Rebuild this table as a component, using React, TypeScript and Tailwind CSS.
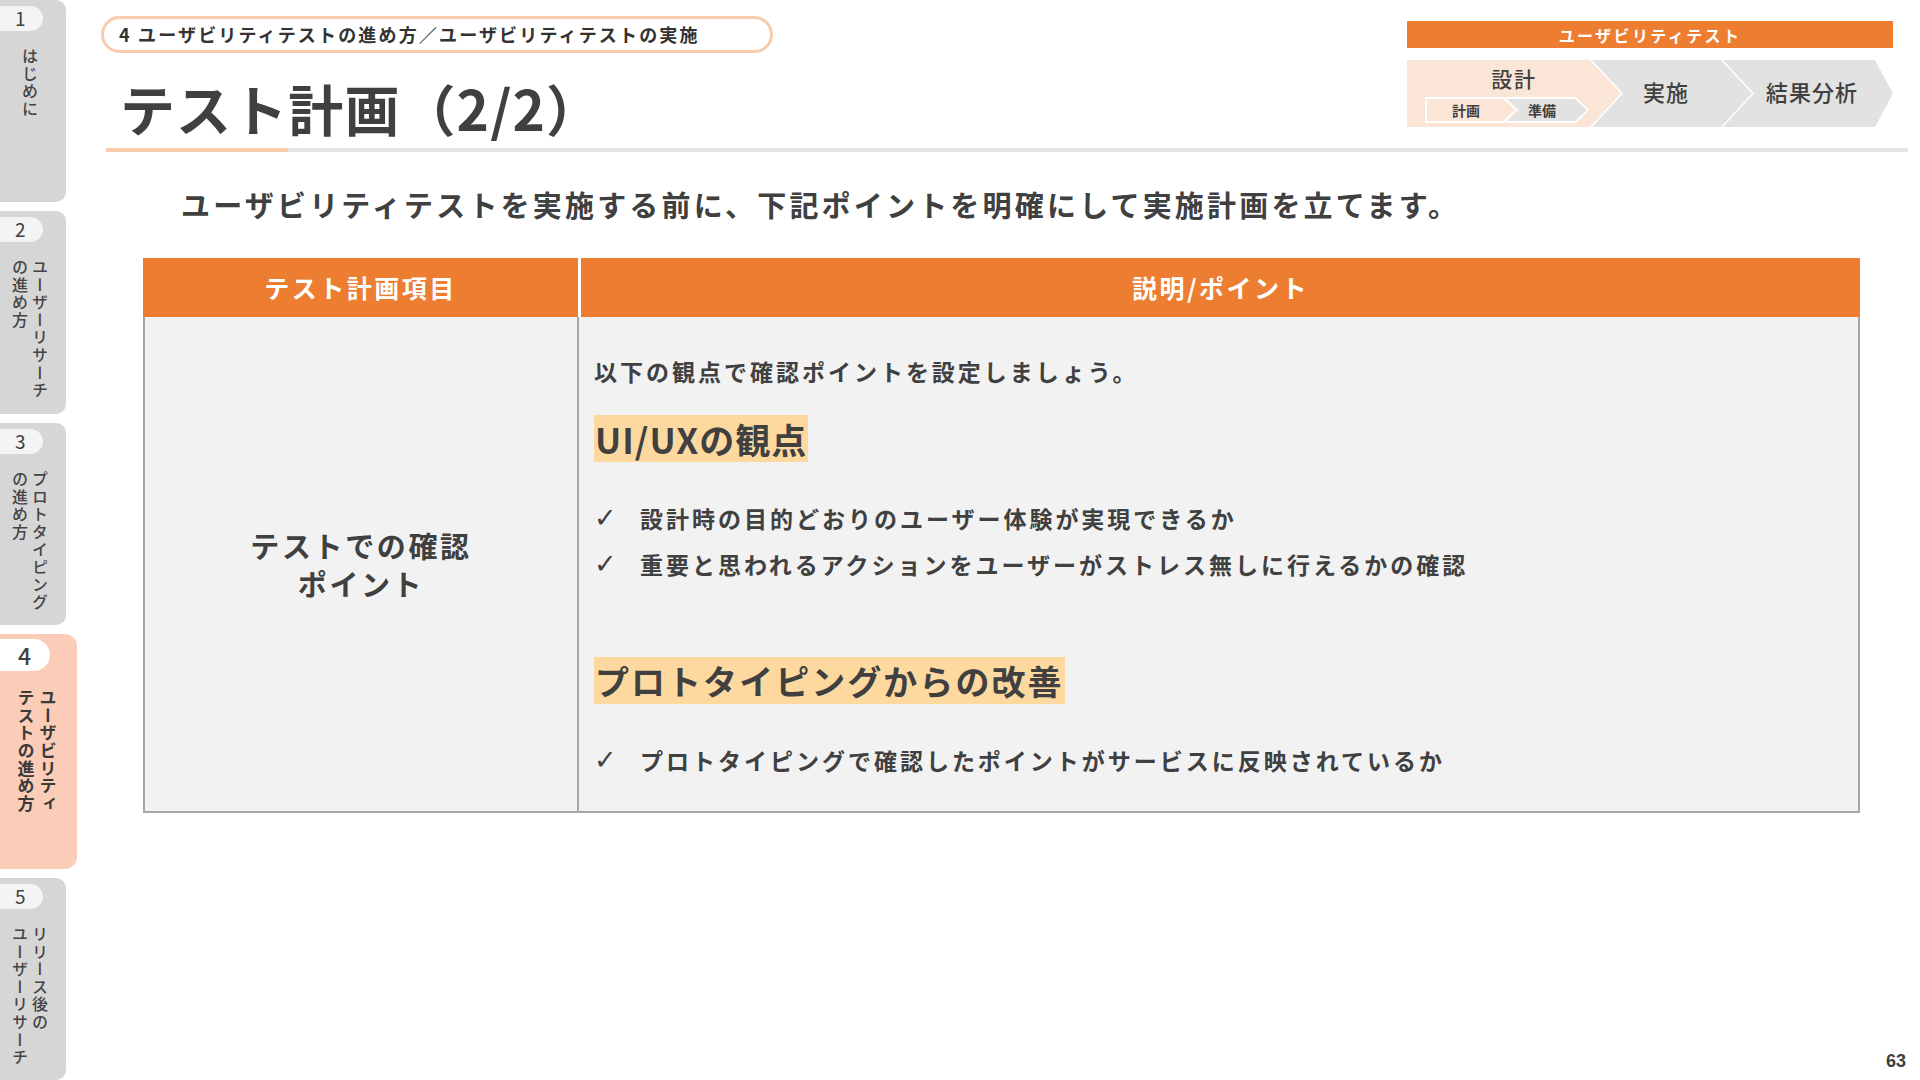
const JP = { fontFamily: '"Noto Sans CJK JP", "Noto Sans", sans-serif' };

const tabs = [
  { num: "1", lines: ["はじめに"], h: "h-[202px]" },
  { num: "2", lines: ["ユーザーリサーチ", "の進め方"], h: "h-[203px]" },
  { num: "3", lines: ["プロトタイピング", "の進め方"], h: "h-[202px]" },
  { num: "4", lines: ["ユーザビリティ", "テストの進め方"], h: "h-[235px]", active: true },
  { num: "5", lines: ["リリース後の", "ユーザーリサーチ"], h: "h-[202px]" },
];

function SideTab({ num, lines, h, active }: { num: string; lines: string[]; h: string; active?: boolean }) {
  if (active) {
    return (
      <div className={`${h} w-[77px] shrink-0 rounded-r-[12px] bg-[#fbcdb8] pt-[5px]`}>
        <div className="flex h-[32px] w-[50px] items-center rounded-r-full bg-white pl-[18px] text-[23px] font-medium text-[#404040]">
          {num}
        </div>
        <div className="mt-[18px] flex justify-center pr-[4px]">
          <div className="text-[17px] font-bold leading-[22px] tracking-[0.04em] text-[#3a3a3a] [writing-mode:vertical-rl]">
            {lines.map((l, i) => (
              <div key={i}>{l}</div>
            ))}
          </div>
        </div>
      </div>
    );
  }
  return (
    <div className={`${h} w-[66px] shrink-0 rounded-r-[10px] bg-[#d6d6d6] pt-[6px]`}>
      <div className="flex h-[25px] w-[43px] items-center rounded-r-full bg-[#f4f4f4] pl-[15px] text-[19px] text-[#404040]">
        {num}
      </div>
      <div className="mt-[17px] flex justify-center pr-[6px]">
        <div className="text-[16px] font-medium leading-[20px] tracking-[0.1em] text-[#444] [writing-mode:vertical-rl]">
          {lines.map((l, i) => (
            <div key={i}>{l}</div>
          ))}
        </div>
      </div>
    </div>
  );
}

function Process() {
  return (
    <div className="mr-[15px] w-[486px] shrink-0 pt-[21px]">
      <div className="flex h-[27px] items-center justify-center bg-[#ed7d31] text-[16px] font-bold tracking-[0.15em] text-white">
        ユーザビリティテスト
      </div>
      <div className="mt-[12px] flex h-[67px]">
        <div className="flex h-full w-[214px] shrink-0 flex-col bg-[#fbe5d6] pl-[18px] [clip-path:polygon(0_0,calc(100%-31px)_0,100%_50%,calc(100%-31px)_100%,0_100%)]">
          <div className="flex h-[37px] w-[178px] items-center justify-center text-[21px] font-medium tracking-[0.08em] text-[#404040]">
            設計
          </div>
          <div className="flex h-[26px]">
            <div className="h-full w-[92px] shrink-0 bg-white p-[2px] [clip-path:polygon(0_0,calc(100%-13px)_0,100%_50%,calc(100%-13px)_100%,0_100%)]">
              <div className="flex h-full w-full items-center justify-center bg-[#fbe5d6] pr-[10px] text-[14px] font-bold text-[#404040] [clip-path:polygon(0_0,calc(100%-12px)_0,100%_50%,calc(100%-12px)_100%,0_100%)]">
                計画
              </div>
            </div>
            <div className="ml-[-12px] h-full w-[84px] shrink-0 bg-white p-[2px] [clip-path:polygon(0_0,calc(100%-13px)_0,100%_50%,calc(100%-13px)_100%,0_100%,13px_50%)]">
              <div className="flex h-full w-full items-center justify-center bg-[#e2e2e2] pr-[10px] text-[14px] font-bold text-[#404040] [clip-path:polygon(0_0,calc(100%-12px)_0,100%_50%,calc(100%-12px)_100%,0_100%,12px_50%)]">
                準備
              </div>
            </div>
          </div>
        </div>
        <div className="ml-[-29px] flex h-full w-[160px] shrink-0 items-center justify-center bg-[#e2e2e2] pb-[4px] pl-[22px] pr-[34px] text-[22px] font-medium tracking-[0.05em] text-[#404040] [clip-path:polygon(0_0,calc(100%-31px)_0,100%_50%,calc(100%-31px)_100%,0_100%,31px_50%)]">
          実施
        </div>
        <div className="ml-[-29px] flex h-full w-[170px] shrink-0 items-center justify-center bg-[#e2e2e2] pb-[4px] pl-[22px] pr-[14px] text-[22px] font-medium tracking-[0.05em] text-[#404040] [clip-path:polygon(0_0,calc(100%-18px)_0,100%_50%,calc(100%-18px)_100%,0_100%,31px_50%)]">
          結果分析
        </div>
      </div>
    </div>
  );
}

function Check({ children, className = "" }: { children: string; className?: string }) {
  return (
    <div className={`flex h-[32px] items-center ${className}`}>
      <span className="w-[46px] shrink-0 text-[27px] leading-[32px] text-[#404040]" style={{ fontFamily: '"DejaVu Sans", sans-serif' }}>
        ✓
      </span>
      <span className="text-[23px] font-bold tracking-[0.13em] text-[#404040]">{children}</span>
    </div>
  );
}

export default function App() {
  return (
    <div className="flex h-[1080px] w-[1920px] overflow-hidden bg-white" style={JP}>
      <aside className="flex w-[77px] shrink-0 flex-col gap-[9px]">
        {tabs.map((t) => (
          <SideTab key={t.num} {...t} />
        ))}
      </aside>

      <main className="relative flex-1 pl-[29px] pr-[12px]">
        <header className="flex h-[148px]">
          <div className="flex-1 pt-[16px]">
            <div className="ml-[-5px] flex h-[37px] w-[672px] items-center rounded-full border-[3px] border-[#f8cbad] pl-[15px] text-[18px] font-bold tracking-[0.12em] text-[#333]">
              4 ユーザビリティテストの進め方／ユーザビリティテストの実施
            </div>
            <h1 className="mt-[22px] h-[64px] pl-[14px] text-[55px] font-bold leading-[64px] tracking-[0.02em] text-[#404040]">
              テスト計画（2/2）
            </h1>
          </div>
          <Process />
        </header>
        <div className="flex h-[4px]">
          <div className="w-[182px] bg-[#f8cbad]" />
          <div className="flex-1 bg-[#e4e4e4]" />
        </div>

        <p className="mt-[32px] pl-[75px] text-[29px] font-bold leading-[40px] tracking-[0.11em] text-[#404040]">
          ユーザビリティテストを実施する前に、下記ポイントを明確にして実施計画を立てます。
        </p>

        <div className="ml-[37px] mt-[34px] w-[1717px]">
          <div className="flex h-[59px] gap-[3px] text-[25px] font-bold tracking-[0.1em] text-white">
            <div className="flex w-[435px] items-center justify-center bg-[#ed7d31]">テスト計画項目</div>
            <div className="flex flex-1 items-center justify-center bg-[#ed7d31]">説明/ポイント</div>
          </div>
          <div className="flex h-[496px] border-b-2 border-[#a6a6a6] bg-[#f2f2f2]">
            <div className="flex w-[436px] flex-col items-center justify-center border-x-2 border-[#a6a6a6] text-center text-[29px] font-bold leading-[38px] tracking-[0.09em] text-[#404040]">
              <div>テストでの確認</div>
              <div>ポイント</div>
            </div>
            <div className="flex-1 border-r-2 border-[#a6a6a6] pl-[15px] pt-[38px]">
              <div className="h-[32px] text-[23px] font-bold leading-[32px] tracking-[0.13em] text-[#404040]">
                以下の観点で確認ポイントを設定しましょう。
              </div>
              <div className="mt-[28px] flex">
                <span className="h-[47px] bg-[#fdd9a0] px-[1px] text-[35px] font-bold leading-[47px] tracking-[0.03em] text-[#404040]">
                  UI/UXの観点
                </span>
              </div>
              <Check className="mt-[40px]">設計時の目的どおりのユーザー体験が実現できるか</Check>
              <Check className="mt-[14px]">重要と思われるアクションをユーザーがストレス無しに行えるかの確認</Check>
              <div className="mt-[77px] flex">
                <span className="h-[47px] bg-[#fdd9a0] px-[1px] text-[34px] font-bold leading-[47px] tracking-[0.06em] text-[#404040]">
                  プロトタイピングからの改善
                </span>
              </div>
              <Check className="mt-[40px]">プロトタイピングで確認したポイントがサービスに反映されているか</Check>
            </div>
          </div>
        </div>

        <div
          className="absolute bottom-[5px] right-[14px] text-[18px] font-bold text-[#404040]"
          style={{ fontFamily: '"Liberation Sans", Arial, sans-serif' }}
        >
          63
        </div>
      </main>
    </div>
  );
}
